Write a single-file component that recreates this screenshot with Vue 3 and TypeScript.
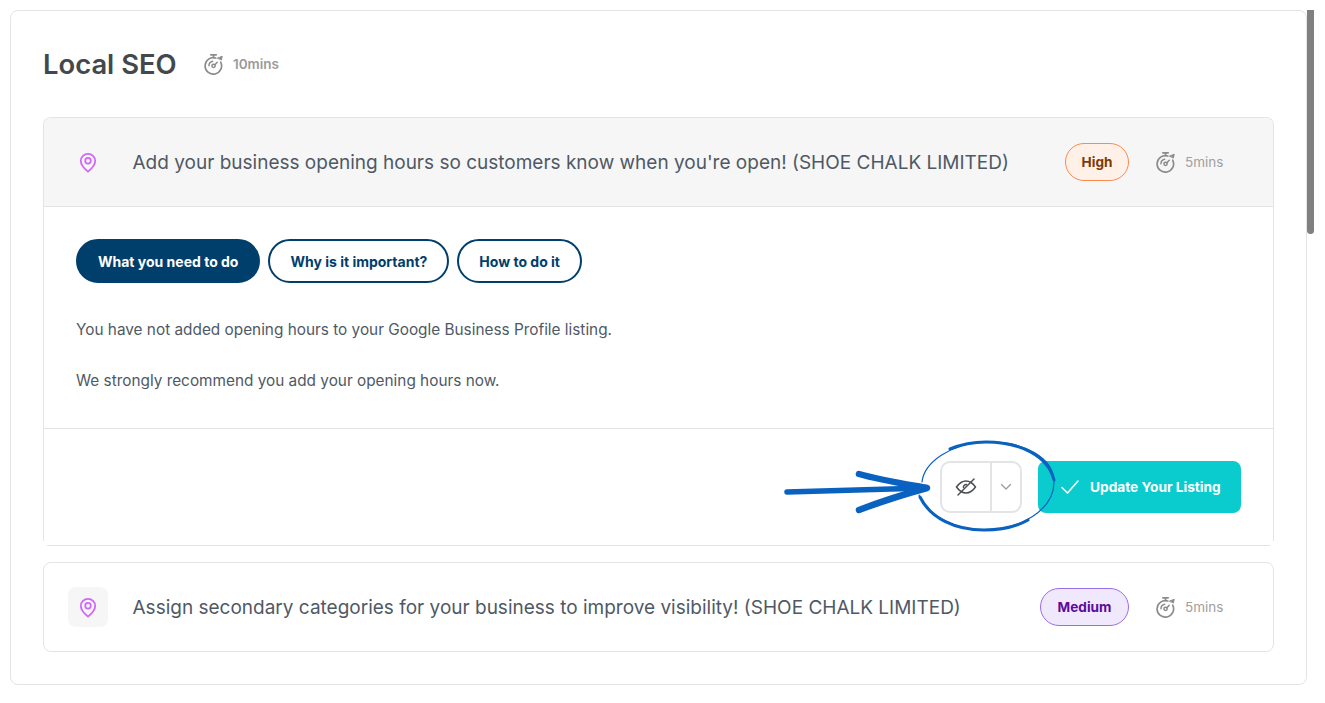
<template>
  <div class="page">
    <section class="panel">
      <header class="panel-head">
        <h1>Local SEO</h1>
        <svg class="timer big" viewBox="0 0 24 24"><use href="#stopwatch" /></svg>
        <span class="panel-time">10mins</span>
      </header>

      <article class="task open">
        <div class="task-head shaded">
          <span class="pin-box"><svg class="pin" viewBox="0 0 20 24"><use href="#pin" /></svg></span>
          <span class="task-title">{{ tasks[0].title }}</span>
          <span class="badge high">High</span>
          <svg class="timer" viewBox="0 0 24 24"><use href="#stopwatch" /></svg>
          <span class="task-time">5mins</span>
        </div>

        <div class="task-body">
          <div class="tabs">
            <button v-for="(tab, i) in tabs" :key="tab" class="tab" :class="{ active: i === 0 }">{{ tab }}</button>
          </div>
          <p>You have not added opening hours to your Google Business Profile listing.</p>
          <p>We strongly recommend you add your opening hours now.</p>
        </div>

        <footer class="task-foot">
          <div class="hide-group">
            <span class="hide-eye">
              <svg viewBox="0 0 24 24" width="24" height="24" fill="none" stroke="#4a4f54" stroke-width="1.500" stroke-linecap="round" stroke-linejoin="round">
                <path d="M2.500 12C5 8.500 8 6 12 6s7 2.500 9.500 6c-2.500 3.500-5.500 6-9.500 6s-7-2.500-9.500-6z" />
                <path d="M9.500 12.500A2.600 2.600 0 0 1 12.500 9.500" />
                <path d="M20 4 4 20" />
              </svg>
            </span>
            <span class="hide-more">
              <svg viewBox="0 0 12 8" width="12" height="8" fill="none" stroke="#9a9fa4" stroke-width="1.400" stroke-linecap="round" stroke-linejoin="round"><path d="M1.500 1.500 6 6l4.500-4.500" /></svg>
            </span>
          </div>
          <button class="update">
            <svg viewBox="0 0 20 16" width="20" height="16" fill="none" stroke="#fff" stroke-width="1.500" stroke-linecap="round" stroke-linejoin="round"><path d="M2 8.500 7.500 14 18 2" /></svg>
            Update Your Listing
          </button>
        </footer>
      </article>
      <div class="task-end"></div>

      <article class="task">
        <div class="task-head">
          <span class="pin-box tinted"><svg class="pin" viewBox="0 0 20 24"><use href="#pin" /></svg></span>
          <span class="task-title">{{ tasks[1].title }}</span>
          <span class="badge medium">Medium</span>
          <svg class="timer" viewBox="0 0 24 24"><use href="#stopwatch" /></svg>
          <span class="task-time">5mins</span>
        </div>
      </article>
    </section>
    <div class="scroll-thumb"></div>

    <!-- hand drawn annotation on top of the screenshot -->
    <svg class="scribble" viewBox="0 0 1325 703" width="1325" height="703" fill="none" stroke="#0a62c0" stroke-linecap="round" stroke-linejoin="round">
      <path stroke-width="5.500" d="M787 492 926 488" />
      <path stroke-width="6.500" d="M859 474C880 480 905 484 927 488 905 494 880 502 859 510" />
      <path stroke-width="1.200" d="M922 482C924 463 950 443 986 442 1024 441 1054 458 1054 482 1054 510 1020 530 984 530 950 530 926 512 919 495" />
      <path stroke-width="3" d="M950 449C962 444 975 442 986 442 1020 442 1048 456 1054 480" />
      <path stroke-width="3" d="M920 497C930 518 955 530 984 530 1000 530 1016 527 1028 520" />
      <defs>
        <g id="stopwatch" stroke="#8b8b8b" stroke-width="1.800" stroke-linecap="round" stroke-linejoin="round" fill="none">
          <path d="M19.300 10A9 9 0 1 1 14 5.500" />
          <path d="M8.500 2h6M11.500 2v3" />
          <path d="M16 5.500 21 3.500l-.8 3.800z" fill="#8b8b8b" stroke-width="1" />
          <circle cx="11.500" cy="14" r="1.800" stroke-width="1.600" />
          <path d="M13 12.700 15.500 10M6.500 14a5 5 0 0 1 4-4.900" stroke-width="1.600" />
        </g>
        <g id="pin" stroke="#cf66fb" stroke-width="2" fill="none" stroke-linejoin="round">
          <path d="M10 22.500C5 18.300 1.800 14.500 1.800 10.200a8.200 8.200 0 0 1 16.400 0c0 4.300-3.200 8.100-8.200 12.300z" />
          <circle cx="10" cy="10" r="3.200" />
        </g>
      </defs>
    </svg>
  </div>
</template>

<script setup lang="ts">
interface Task {
  title: string;
}

const tasks: Task[] = [
  { title: "Add your business opening hours so customers know when you're open! (SHOE CHALK LIMITED)" },
  { title: 'Assign secondary categories for your business to improve visibility! (SHOE CHALK LIMITED)' },
];

const tabs = ['What you need to do', 'Why is it important?', 'How to do it'];
</script>

<style>
html,
body {
  margin: 0;
  height: 703px;
  overflow: hidden;
  background: #fff;
}
</style>

<style scoped>
.page {
  position: relative;
  display: flex;
  align-items: flex-start;
  width: 1325px;
  height: 703px;
  font-family: Inter, 'Noto Sans', sans-serif;
  color: #4b5563;
}

.panel {
  box-sizing: border-box;
  width: 1297px;
  height: 675px;
  margin: 10px 0 0 10px;
  padding: 0 32px;
  border: 1px solid #e2e4e8;
  border-radius: 8px;
}

.scroll-thumb {
  width: 7px;
  height: 224px;
  margin-top: 10px;
  background: #808080;
  border-radius: 0 0 4px 4px;
}

.panel-head {
  display: flex;
  align-items: center;
  height: 106px;
}

.panel-head h1 {
  width: 160px;
  margin: 0;
  font-size: 27.400px;
  font-weight: 600;
  white-space: nowrap;
  color: #43484d;
}

.panel-time {
  margin-left: 8px;
  font-size: 13.500px;
  font-weight: 600;
  color: #9a9a9a;
}

.timer {
  width: 22px;
  height: 22px;
  flex: none;
}

.task {
  box-sizing: border-box;
  border: 1px solid #e2e4e8;
  border-radius: 8px;
  background: #fff;
}

.task.open {
  height: 424px;
  border-bottom: 0;
  border-radius: 8px 8px 0 0;
  overflow: hidden;
}

.task-end {
  height: 1px;
  margin: 4px 4px 16px;
  background: #e2e4e8;
}

.task-head {
  box-sizing: border-box;
  display: flex;
  align-items: center;
  height: 88px;
  padding: 0 49px 0 24px;
}

.task-head.shaded {
  height: 89px;
  background: #f6f6f6;
  border-bottom: 1px solid #e2e4e8;
}

.pin-box {
  display: flex;
  align-items: center;
  justify-content: center;
  width: 40px;
  height: 40px;
  margin-right: 24.500px;
  flex: none;
  border-radius: 8px;
}

.pin-box.tinted {
  background: #f6f6f6;
}

.pin {
  width: 18px;
  height: 21px;
}

.task-title {
  flex: 1;
  font-size: 19px;
  white-space: nowrap;
  color: #4f5965;
}

.badge {
  box-sizing: border-box;
  display: flex;
  align-items: center;
  justify-content: center;
  height: 38px;
  margin-right: 25.500px;
  border-radius: 19px;
  font-size: 13.600px;
  font-weight: 700;
}

.badge.high {
  width: 64px;
  background: #fff0e8;
  border: 1px solid #fb8b4e;
  color: #7c3a06;
}

.badge.medium {
  width: 89px;
  background: #f0e8fc;
  border: 1px solid #9a6ee8;
  color: #5f0a9c;
}

.task-time {
  width: 39px;
  margin-left: 8.500px;
  font-size: 13.500px;
  white-space: nowrap;
  color: #a0a0a0;
}

.task-body {
  height: 222px;
  box-sizing: border-box;
  padding: 32px 32px 0;
  border-bottom: 1px solid #e2e4e8;
}

.tabs {
  display: flex;
  gap: 8px;
  margin-bottom: 37px;
}

.tab {
  box-sizing: border-box;
  height: 44px;
  padding: 0 20px;
  background: #fff;
  border: 2px solid #003e6b;
  border-radius: 22px;
  font: 700 14px Inter, 'Noto Sans', sans-serif;
  color: #003e6b;
}

.tab.active {
  background: #003e6b;
  color: #fff;
}

.task-body p {
  margin: 0 0 31px;
  font-size: 15.350px;
  line-height: 20px;
  color: #4f5965;
}

.task-foot {
  display: flex;
  align-items: flex-start;
  justify-content: flex-end;
  gap: 16px;
  padding: 32px 32px 0;
}

.hide-group {
  box-sizing: border-box;
  display: flex;
  width: 82px;
  height: 52px;
  border: 2px solid #e2e4e8;
  border-radius: 10px;
}

.hide-eye,
.hide-more {
  display: flex;
  align-items: center;
  justify-content: center;
}

.hide-eye {
  width: 48px;
  border-right: 2px solid #e2e4e8;
}

.hide-more {
  flex: 1;
}

.update {
  display: flex;
  align-items: center;
  gap: 10px;
  box-sizing: border-box;
  width: 203px;
  height: 52px;
  padding: 0 0 0 22px;
  background: #0accce;
  border: 0;
  border-radius: 8px;
  font: 700 13.700px Inter, 'Noto Sans', sans-serif;
  color: #fff;
}

.scribble {
  position: absolute;
  left: 0;
  top: 0;
  pointer-events: none;
}
</style>
